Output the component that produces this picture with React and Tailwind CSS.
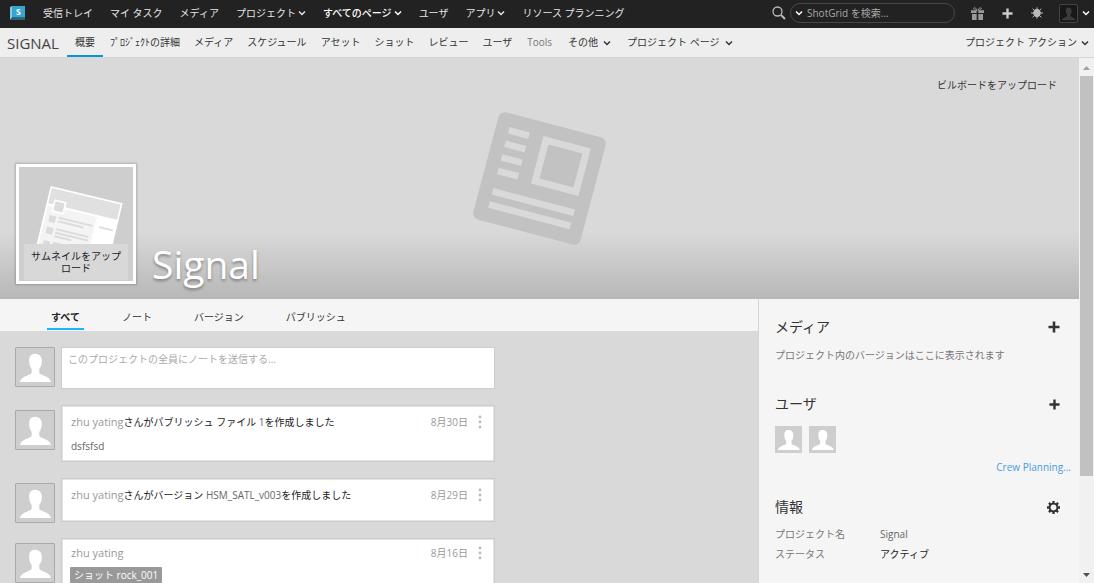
import React from 'react';

const globalLinks = [
  { label: '受信トレイ' },
  { label: 'マイ タスク' },
  { label: 'メディア' },
  { label: 'プロジェクト', menu: true },
  { label: 'すべてのページ', menu: true, strong: true },
  { label: 'ユーザ' },
  { label: 'アプリ', menu: true },
  { label: 'リソース プランニング' },
];

const projectLinks = [
  { label: '概要', active: true },
  { label: 'ﾌﾟﾛｼﾞｪｸﾄの詳細' },
  { label: 'メディア' },
  { label: 'スケジュール' },
  { label: 'アセット' },
  { label: 'ショット' },
  { label: 'レビュー' },
  { label: 'ユーザ' },
  { label: 'Tools', muted: true },
  { label: 'その他', menu: true },
  { label: 'プロジェクト ページ', menu: true },
];

const tabs = ['すべて', 'ノート', 'バージョン', 'パブリッシュ'];

const updates = [
  { user: 'zhu yating', before: 'さんがパブリッシュ ファイル ', entity: '1', after: 'を作成しました', date: '8月30日', body: 'dsfsfsd', size: 'h-[57px] pt-[6px]' },
  { user: 'zhu yating', before: 'さんがバージョン ', entity: 'HSM_SATL_v003', after: 'を作成しました', date: '8月29日', size: 'h-11 pt-[6px]' },
  { user: 'zhu yating', date: '8月16日', tag: 'ショット rock_001', size: 'h-20 pt-1' },
];

function Chevron() {
  return (
    <svg viewBox="0 0 8 8" className="w-2 h-2 shrink-0" fill="none" stroke="currentColor" strokeWidth="1.5">
      <path d="M1 2.500 4 5.500 7 2.500" />
    </svg>
  );
}

function Plus({ className }) {
  return (
    <svg viewBox="0 0 12 12" className={className} fill="currentColor">
      <path d="M4.700 0.500h2.600v4.200h4.200v2.600H7.300v4.200H4.700V7.300H0.500V4.700h4.200z" />
    </svg>
  );
}

function Gift() {
  return (
    <svg viewBox="0 0 39 39" className="w-[13px] h-[13px]" fill="currentColor">
      <path d="M0 10h17v8H0zM22 10h17v8H22zM3 21h14v18H3zM22 21h14v18H22z" />
      <path d="M18 10C16 3 9 0 8 4c-1 3 4 6 10 6zM21 10c2-7 9-10 10-6 1 3-4 6-10 6z" fill="none" stroke="currentColor" strokeWidth="3" />
    </svg>
  );
}

function Silhouette({ className }) {
  return (
    <svg viewBox="0 0 40 40" className={className} fill="currentColor">
      <path d="M20 6c4.600 0 7.200 3 7.200 7.500 0 4-1 6.500-2.700 8.500v3.500c0 1.500 1.500 2.200 4 3.200 4.500 1.800 7.500 3.300 8.200 7H4.300c.7-3.700 3.700-5.200 8.200-7 2.500-1 4-1.700 4-3.200V22c-1.700-2-2.700-4.500-2.700-8.500C13.800 9 15.400 6 20 6z" />
    </svg>
  );
}

function Avatar() {
  return (
    <div className="w-10 h-10 shrink-0 bg-[#cecece] border border-[#a9a9a9] rounded-[1px] text-white">
      <Silhouette className="w-full h-full" />
    </div>
  );
}

function Logo() {
  return (
    <svg viewBox="0 0 45 42" className="w-[15px] h-[14px]">
      <path d="M0 4 6 0v36l-6 6z" fill="#8fc7de" />
      <path d="M0 42 6 34h39v8z" fill="#2f6175" />
      <path d="M6 0h39v34H6z" fill="#36a5d2" />
      <text x="25" y="27" fontSize="26" fontWeight="700" textAnchor="middle" fill="#fff">S</text>
    </svg>
  );
}

function BugIcon() {
  return (
    <svg viewBox="0 0 36 36" className="w-3 h-3" stroke="currentColor" strokeWidth="3">
      <ellipse cx="18" cy="18" rx="10" ry="11" fill="currentColor" />
      <path d="M18 1v8M5 5l8 8M31 5l-8 8M0 18h10M26 18h10M5 31l8-8M31 31l-8-8M18 28v7" fill="none" />
    </svg>
  );
}

function GearIcon() {
  return (
    <svg viewBox="0 0 40 40" className="w-[13px] h-[13px]" fill="none" stroke="currentColor">
      <circle cx="20" cy="20" r="12" strokeWidth="6" />
      <path d="M20 0v8M20 32v8M0 20h8M32 20h8M5.900 5.900l5.600 5.600M28.500 28.500l5.600 5.600M5.900 34.100l5.600-5.600M28.500 11.500l5.600-5.600" strokeWidth="7" />
    </svg>
  );
}

function BillboardArt() {
  return (
    <svg viewBox="-202 -202 404 404" className="w-[135px] h-[135px]">
      <g transform="rotate(14.8)" fill="#d9d9d9">
        <rect x="-166" y="-166" width="332" height="332" rx="20" fill="#c2c2c2" />
        <rect x="-126" y="-126" width="63" height="20" />
        <rect x="-126" y="-84" width="63" height="20" />
        <rect x="-126" y="-42" width="63" height="20" />
        <rect x="-126" y="0" width="63" height="20" />
        <rect x="-126" y="63" width="252" height="20" />
        <rect x="-126" y="104" width="252" height="20" />
        <path fillRule="evenodd" d="M-21-126h147V21H-21zM0-105V0h105v-105z" />
      </g>
    </svg>
  );
}

function ThumbnailArt() {
  return (
    <svg viewBox="57 51 342 342" className="w-full h-full">
      <g transform="translate(152 108) rotate(13.5)" fill="#dcdcdc">
        <rect width="222" height="220" fill="#fff" />
        <rect x="5" y="5" width="212" height="47" fill="#e0e0e0" />
        <rect x="5" y="58" width="151" height="160" fill="#f4f4f4" />
        <rect x="20" y="36" width="38" height="38" fill="#fff" />
        <rect x="25" y="41" width="28" height="28" />
        <rect x="18" y="85" width="20" height="20" />
        <rect x="18" y="121" width="20" height="20" />
        <rect x="18" y="162" width="20" height="20" />
        <path d="M46 84h104v6H46zM46 95h78v6H46zM46 119h100v6H46zM46 130h100v6H46zM46 141h52v6H46zM46 161h100v6H46zM46 172h80v6H46zM170 83h42v6h-42z" />
      </g>
    </svg>
  );
}

function GlobalNav() {
  return (
    <header className="h-7 shrink-0 flex items-center bg-[#222] text-[#e6e6e6] pl-[10px] pr-1 pb-[2px]">
      <a href="#" aria-label="ShotGrid"><Logo /></a>
      <nav className="flex items-center gap-[17px] ml-[18px] whitespace-nowrap">
        {globalLinks.map((l) => (
          <a key={l.label} href="#" className={`flex items-center gap-[2px] ${l.strong ? 'font-medium text-white' : ''}`}>
            {l.label}
            {l.menu && <Chevron />}
          </a>
        ))}
      </nav>
      <div className="flex items-center ml-auto text-[#bbb]">
        <svg viewBox="0 0 14 14" className="w-[14px] h-[14px] mr-1" fill="none" stroke="currentColor">
          <circle cx="5.500" cy="5.500" r="4.500" strokeWidth="1.300" />
          <path d="m9 9 4 4" strokeWidth="2" />
        </svg>
        <div className="w-[165px] h-5 flex items-center gap-1 px-1 border border-[#484848] rounded-full">
          <button type="button" aria-label="検索範囲" className="text-white"><Chevron /></button>
          <input type="text" aria-label="検索" placeholder="ShotGrid を検索..." className="w-full min-w-0 bg-transparent outline-none placeholder:text-[#a8a8a8]" />
        </div>
        <button type="button" aria-label="新機能" className="ml-4 text-[#999]"><Gift /></button>
        <button type="button" aria-label="作成" className="ml-[18px] text-[#ccc]"><Plus className="w-[11px] h-[11px]" /></button>
        <button type="button" aria-label="デバッグ" className="ml-[18px]"><BugIcon /></button>
        <button type="button" aria-label="アカウント" className="ml-4 flex items-center gap-1 text-white">
          <span className="w-[19px] h-[19px] bg-[#181818] border border-[#444] rounded-[2px] text-[#3c3c3c]">
            <Silhouette className="w-full h-full" />
          </span>
          <Chevron />
        </button>
      </div>
    </header>
  );
}

function ProjectNav() {
  return (
    <div className="h-[30px] shrink-0 flex items-center bg-[#eee] border-b border-[#d6d6d6] pl-[7px] pr-[5px] text-[#333]">
      <span className="w-[60px] text-[15px] font-medium leading-5 text-[#444]">SIGNAL</span>
      <nav className="flex h-full whitespace-nowrap">
        {projectLinks.map((l) => (
          <a
            key={l.label}
            href="#"
            className={`flex items-center gap-[5px] pt-[2px] border-b-2 ${l.active ? 'border-[#0696d7]' : 'border-transparent'} ${l.active || l.menu || l.muted ? 'px-2' : 'px-[7px]'} ${l.muted ? 'text-[#777]' : ''}`}
          >
            {l.label}
            {l.menu && <Chevron />}
          </a>
        ))}
      </nav>
      <button type="button" className="ml-auto flex items-center gap-1 whitespace-nowrap">
        プロジェクト アクション
        <Chevron />
      </button>
    </div>
  );
}

function Hero() {
  return (
    <section className="relative h-[241px] flex flex-col justify-end bg-linear-to-b from-[#d9d9d9] from-72% to-[#b7b7b7]">
      <div className="absolute inset-x-0 top-[53px] flex justify-center">
        <BillboardArt />
      </div>
      <button type="button" className="absolute top-5 right-[22px] text-[#333]">ビルボードをアップロード</button>
      <div className="relative flex items-end pl-4 pb-[15px] gap-4">
        <div className="relative w-[120px] h-[120px] bg-[#cecece] border-[3px] border-white shadow-[0_0_2px_1px_rgba(0,0,0,0.2)]">
          <ThumbnailArt />
          <button type="button" className="absolute inset-x-[5px] bottom-[1px] h-9 px-[6px] bg-[#d8d8d8] leading-3 text-[#222]">
            サムネイルをアップロード
          </button>
        </div>
        <h1 className="text-[39px] leading-10 text-white [text-shadow:0_2px_3px_rgba(0,0,0,0.35)]">Signal</h1>
      </div>
    </section>
  );
}

function Update({ item }) {
  return (
    <li className="flex gap-[6px]">
      <div className="h-11 pt-[5px]"><Avatar /></div>
      <article className={`w-[434px] ${item.size} px-2 bg-white border border-[#ccc] shadow-[inset_0_0_0_1px_#e4e4e4]`}>
        <div className="flex items-center h-5 pl-px whitespace-nowrap">
          <p className="text-[#222]">
            <a href="#" className="text-[11px] text-[#999]">{item.user}</a>
            {item.before}
            {item.entity && <a href="#" className="text-[#666]">{item.entity}</a>}
            {item.after}
          </p>
          <time className="ml-auto text-[#999]">{item.date}</time>
          <button type="button" aria-label="メニュー" className="ml-2 mr-[2px] text-[#bbb]">
            <svg viewBox="0 0 4 14" className="w-2 h-[14px]" fill="currentColor">
              <circle cx="2" cy="2" r="1.400" />
              <circle cx="2" cy="7" r="1.400" />
              <circle cx="2" cy="12" r="1.400" />
            </svg>
          </button>
        </div>
        {item.body && <p className="mt-[6px] pl-px leading-4 text-[#666]">{item.body}</p>}
        {item.tag && <a href="#" className="inline-block mt-1 px-1 leading-4 rounded-[1px] bg-[#999] text-white">{item.tag}</a>}
      </article>
    </li>
  );
}

function Feed() {
  return (
    <main className="flex-1 min-w-0">
      <div role="tablist" className="flex h-8 pl-[47px] gap-[26px] bg-[#f5f5f5] text-[#333]">
        {tabs.map((t, i) => (
          <button
            key={t}
            type="button"
            role="tab"
            aria-selected={i === 0}
            className={`h-[31px] pt-[7px] border-b-2 whitespace-nowrap ${i === 0 ? 'px-1 mr-1 border-[#19b5fe] font-bold text-[#222]' : 'px-2 border-transparent'}`}
          >
            {t}
          </button>
        ))}
      </div>
      <div className="pl-[15px] pt-4">
        <div className="flex gap-[6px]">
          <Avatar />
          <textarea
            aria-label="ノート"
            placeholder="このプロジェクトの全員にノートを送信する..."
            className="block w-[434px] h-[42px] px-[6px] pt-1 bg-white border border-[#ccc] resize-none outline-none placeholder:text-[#aaa]"
          />
        </div>
        <ul className="mt-4 flex flex-col gap-4">
          {updates.map((u) => <Update key={u.date} item={u} />)}
        </ul>
      </div>
    </main>
  );
}

function PanelHeading({ children, action, label }) {
  return (
    <div className="flex items-center justify-between h-5 pr-[19px]">
      <h2 className="pb-[2px] text-[14px] text-[#333]">{children}</h2>
      <button type="button" aria-label={label} className="text-[#333]">{action}</button>
    </div>
  );
}

function Sidebar() {
  return (
    <aside className="w-[321px] shrink-0 pl-4 pt-[18px] bg-[#f5f5f5] border-l border-[#d6d6d6] text-[#777]">
      <section>
        <PanelHeading label="メディアを追加" action={<Plus className="w-3 h-3" />}>メディア</PanelHeading>
        <p className="mt-[10px] leading-4">プロジェクト内のバージョンはここに表示されます</p>
      </section>
      <section className="mt-[31px]">
        <PanelHeading label="ユーザを追加" action={<Plus className="w-[11px] h-[11px]" />}>ユーザ</PanelHeading>
        <div className="flex gap-[7px] mt-3 text-white">
          <a href="#" aria-label="ユーザ 1" className="bg-[#cecece]"><Silhouette className="w-[27px] h-[27px]" /></a>
          <a href="#" aria-label="ユーザ 2" className="bg-[#cecece]"><Silhouette className="w-[27px] h-[27px]" /></a>
        </div>
        <div className="mt-[6px] pr-2 text-right leading-4">
          <a href="#" className="text-[#4b9cd9]">Crew Planning...</a>
        </div>
      </section>
      <section className="mt-[22px]">
        <PanelHeading label="設定" action={<GearIcon />}>情報</PanelHeading>
        <dl className="mt-[9px] grid grid-cols-[105px_1fr] gap-y-1 leading-4">
          <dt>プロジェクト名</dt>
          <dd className="text-[#666]">Signal</dd>
          <dt>ステータス</dt>
          <dd className="text-[#222]">アクティブ</dd>
        </dl>
      </section>
    </aside>
  );
}

function ScrollTrack() {
  return (
    <div className="w-[15px] shrink-0 flex flex-col items-center bg-[#f1f1f1]">
      <svg viewBox="0 0 7 4" className="w-[7px] h-1 mt-2 mb-[6px] text-[#a0a0a0]" fill="currentColor"><path d="M0 4 3.500 0 7 4z" /></svg>
      <div className="w-[13px] h-[400px] bg-[#c1c1c1]" />
      <svg viewBox="0 0 7 4" className="w-[7px] h-1 mt-auto mb-[6px] text-[#505050]" fill="currentColor"><path d="M0 0h7L3.500 4z" /></svg>
    </div>
  );
}

export default function App() {
  return (
    <div className="h-screen flex flex-col overflow-hidden bg-[#d9d9d9] font-['Open_Sans','Noto_Sans_CJK_JP',sans-serif] text-[10px]">
      <GlobalNav />
      <ProjectNav />
      <div className="flex flex-1 min-h-0">
        <div className="flex-1 min-w-0 flex flex-col overflow-hidden">
          <div className="shrink-0"><Hero /></div>
          <div className="flex flex-1 min-h-0">
            <Feed />
            <Sidebar />
          </div>
        </div>
        <ScrollTrack />
      </div>
    </div>
  );
}
